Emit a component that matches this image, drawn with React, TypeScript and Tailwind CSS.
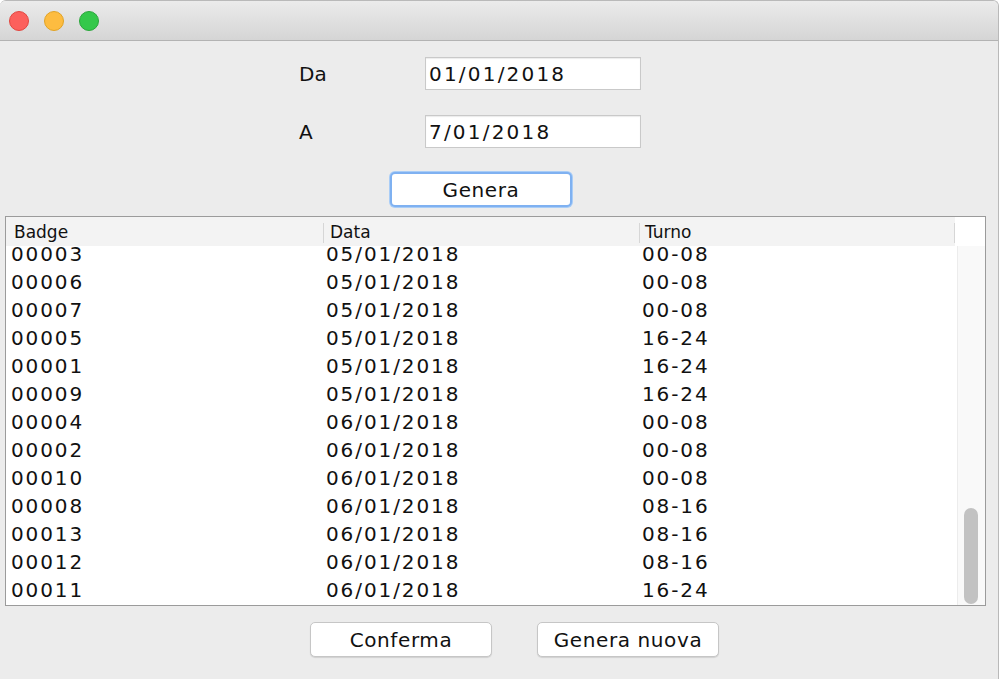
import React from 'react';

const rows = [
  ['00003', '05/01/2018', '00-08'],
  ['00006', '05/01/2018', '00-08'],
  ['00007', '05/01/2018', '00-08'],
  ['00005', '05/01/2018', '16-24'],
  ['00001', '05/01/2018', '16-24'],
  ['00009', '05/01/2018', '16-24'],
  ['00004', '06/01/2018', '00-08'],
  ['00002', '06/01/2018', '00-08'],
  ['00010', '06/01/2018', '00-08'],
  ['00008', '06/01/2018', '08-16'],
  ['00013', '06/01/2018', '08-16'],
  ['00012', '06/01/2018', '08-16'],
  ['00011', '06/01/2018', '16-24'],
];

function MacButton({ label, focused = false }: { label: string; focused?: boolean }) {
  return (
    <button
      className={
        'h-[35px] w-[182px] rounded-[5px] bg-white text-[20px] leading-none tracking-[0.6px] text-[#111] ' +
        (focused
          ? 'border-2 border-[#7fb1f1] shadow-[0_0_0_1px_#a9cdf7]'
          : 'border border-[#c6c6c6] shadow-[0_1px_1px_rgba(0,0,0,0.12)]')
      }
    >
      {label}
    </button>
  );
}

function Field({ label, value }: { label: string; value: string }) {
  return (
    <div className="flex items-center pl-[299px]">
      <div className="w-[126px] text-[20px] text-[#111]">{label}</div>
      <div className="flex h-[33px] w-[216px] items-center border border-[#c9c9c9] bg-white pl-[3px] text-[20px] tracking-[2.2px] text-[#111] shadow-[inset_0_1px_1px_rgba(0,0,0,0.08)]">
        {value}
      </div>
    </div>
  );
}

export default function App() {
  return (
    <div className="h-[679px] w-[1002px] overflow-hidden bg-white" style={{ fontFamily: '"DejaVu Sans", sans-serif' }}>
      <div className="flex h-full w-[999px] flex-col overflow-hidden rounded-t-[6px] border-r border-t border-[#b9b9b9] bg-[#ececec]">
        {/* Title bar */}
        <div className="flex h-[40px] shrink-0 items-center gap-[15px] border-b border-[#b3b3b3] bg-gradient-to-b from-[#ebebeb] to-[#d5d5d5] pl-[9px]">
          <span className="h-[20px] w-[20px] rounded-full border border-[#e2463f] bg-[#fc605c]" />
          <span className="h-[20px] w-[20px] rounded-full border border-[#e1a325] bg-[#fdbc40]" />
          <span className="h-[20px] w-[20px] rounded-full border border-[#2aa63b] bg-[#34c84a]" />
        </div>

        {/* Form */}
        <div className="flex flex-col gap-[25px] pt-[16px]">
          <Field label="Da" value="01/01/2018" />
          <Field label="A" value="7/01/2018" />
        </div>
        <div className="pl-[390px] pt-[24px]">
          <MacButton label="Genera" focused />
        </div>

        {/* Table */}
        <div className="ml-[5px] mt-[9px] flex h-[390px] w-[981px] flex-col border border-[#9b9b9b] bg-white">
          <div className="flex h-[29px] shrink-0 items-center bg-white">
            <div className="flex h-full w-[949px] items-center bg-[#f3f3f3] pt-[3px] text-[17px] text-[#111]">
              <div className="w-[317px] pl-[8px]">Badge</div>
              <div className="h-[20px] w-px bg-[#d6d6d6]" />
              <div className="w-[315px] pl-[6px]">Data</div>
              <div className="h-[20px] w-px bg-[#d6d6d6]" />
              <div className="flex-1 pl-[5px]">Turno</div>
              <div className="h-[20px] w-px bg-[#d6d6d6]" />
            </div>
          </div>
          <div className="flex min-h-0 flex-1">
            <div className="flex-1 overflow-hidden">
              <div className="-mt-[6px]">
                {rows.map((r, i) => (
                  <div key={i} className="flex h-[28px] items-center text-[20px] tracking-[1.9px] text-[#111]">
                    <div className="w-[320px] pl-[5px]">{r[0]}</div>
                    <div className="w-[316px]">{r[1]}</div>
                    <div className="flex-1">{r[2]}</div>
                  </div>
                ))}
              </div>
            </div>
            <div className="flex w-[28px] flex-col justify-end border-l border-[#ececec] bg-[#f9f9f9] pb-[1px] pl-[6px]">
              <div className="h-[96px] w-[14px] rounded-full bg-[#c2c2c2]" />
            </div>
          </div>
        </div>

        {/* Bottom buttons */}
        <div className="flex gap-[45px] pl-[310px] pt-[16px]">
          <MacButton label="Conferma" />
          <MacButton label="Genera nuova" />
        </div>
      </div>
    </div>
  );
}
